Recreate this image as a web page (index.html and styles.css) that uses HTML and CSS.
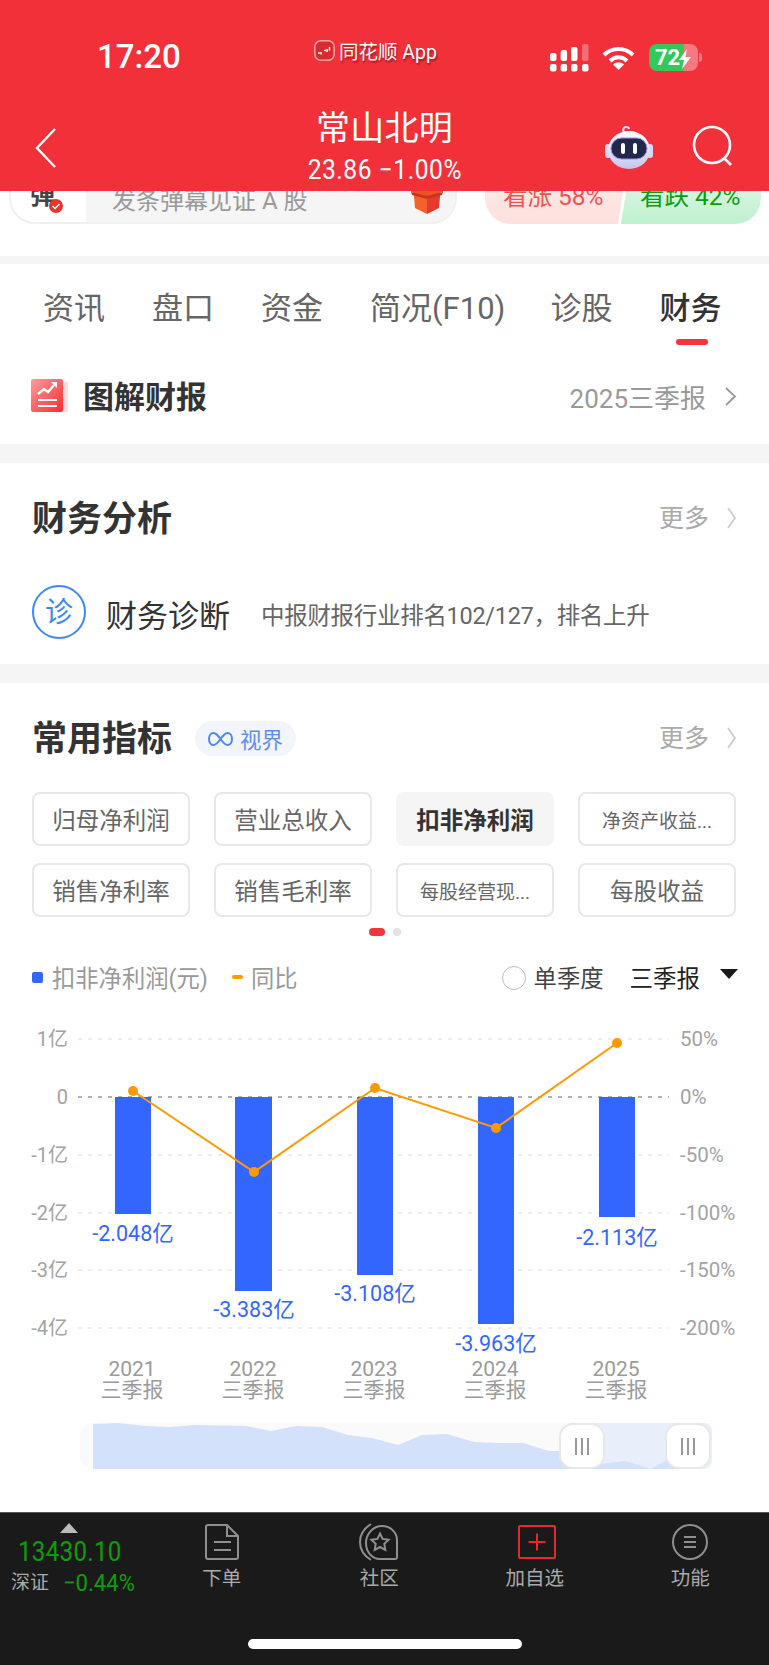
FILE: index.html
```html
<!DOCTYPE html>
<html lang="zh-CN">
<head>
  <meta charset="UTF-8">
  <title>常山北明 财务</title>
  <link rel="stylesheet" href="styles.css">
</head>
<body>
  <header class="top">
    <div class="status">
      <div class="clock">17:20</div>
      <div class="source">
        <svg class="source-logo" width="21" height="21" viewBox="0 0 21 21"><rect x="0.8" y="0.8" width="19.400" height="19.400" rx="6" fill="#d92a30" stroke="#f9a5a5" stroke-width="1.500"/><path d="M4 13h2M7 12v2.500M10 10.500h2M13 9v3M15.500 7v3.500" stroke="#fff" stroke-width="1.500"/></svg>
        <span>同花顺 App</span>
      </div>
      <div class="status-icons">
        <svg width="39" height="28" viewBox="0 0 39 28" fill="#fff">
          <rect x="0" y="9" width="6.500" height="8" rx="2"/><rect x="10.600" y="6" width="6.500" height="11" rx="2"/><rect x="21" y="3" width="6.500" height="14" rx="2"/><rect x="32" y="0" width="6.500" height="17" rx="2" opacity="0.3"/>
          <rect x="0" y="20" width="6.500" height="7.500" rx="2"/><rect x="10.600" y="20" width="6.500" height="7.500" rx="2"/><rect x="21" y="20" width="6.500" height="7.500" rx="2"/><rect x="32" y="20" width="6.500" height="7.500" rx="2"/>
        </svg>
        <svg width="33" height="24" viewBox="0 0 33 24" fill="none" stroke="#fff" stroke-width="4">
          <path d="M2 9C10 1 23 1 31 9"/><path d="M8 15c5-5 12-5 17 0"/><path d="M16.500 24l-5.500-5.500c3-2.600 8-2.600 11 0z" fill="#fff" stroke="none"/>
        </svg>
        <div class="battery">
          <div class="battery-body"><span class="battery-num">72</span>
            <svg class="bolt" width="12" height="20" viewBox="0 0 12 20"><path d="M8 0L0 11h5l-2 9 9-12H6.500z" fill="#fff"/></svg>
          </div>
          <i class="battery-tip"></i>
        </div>
      </div>
    </div>
    <div class="title-row">
      <svg class="back" width="24" height="42" viewBox="0 0 24 42" fill="none" stroke="#fff" stroke-width="2.400"><path d="M21 2L3 21l18 19"/></svg>
      <div class="title">
        <h1>常山北明</h1>
        <p>23.86 <span class="minus">−</span>1.00%</p>
      </div>
      <div class="title-icons">
        <svg width="48" height="44" viewBox="0 0 48 44">
          <defs>
            <linearGradient id="robotShell" x1="0" y1="0" x2="0" y2="1"><stop offset="0" stop-color="#fff"/><stop offset="1" stop-color="#c3c5f0"/></linearGradient>
          </defs>
          <path d="M20 8c-3-2-2-6 1-6 2 0 3 1 3 2" fill="none" stroke="#e8e8f8" stroke-width="2"/>
          <rect x="0" y="19" width="6" height="14" rx="3" fill="#d6d8f2"/><rect x="42" y="19" width="6" height="14" rx="3" fill="#d6d8f2"/>
          <ellipse cx="24" cy="25" rx="21" ry="19" fill="url(#robotShell)"/>
          <rect x="6" y="13" width="36" height="21" rx="10.500" fill="#20294a" stroke="#a78be8"/>
          <rect x="16" y="18" width="4" height="11" rx="2" fill="#fff"/><rect x="28" y="18" width="4" height="11" rx="2" fill="#fff"/>
        </svg>
        <svg width="42" height="42" viewBox="0 0 42 42" fill="none" stroke="#fff" stroke-width="2.600"><circle cx="20" cy="20" r="18"/><path d="M32 33l7 7"/></svg>
      </div>
    </div>
  </header>

  <div class="danmu">
    <div class="danmu-box">
      <div class="danmu-icon">
        <span>弹</span>
        <svg class="danmu-check" width="14" height="14" viewBox="0 0 14 14"><circle cx="7" cy="7" r="7" fill="#e8342e"/><path d="M3.500 7l2.500 2.500 4.500-4.500" fill="none" stroke="#fff" stroke-width="1.500"/></svg>
      </div>
      <div class="danmu-input">
        <span>发条弹幕见证 A 股</span>
        <svg class="gift" width="34" height="40" viewBox="0 0 34 40"><path d="M2 0h15v40L5 34z" fill="#f4622c"/><path d="M17 0h15l-3 34-12 6z" fill="#e63a30"/><path d="M0 0h34l-1 18-16 4-16-4z" fill="#ef5228"/><path d="M1 18l16 4 16-4-1 3-15 4-15-4z" fill="#c8341f"/></svg>
      </div>
    </div>
    <div class="vote">
      <div class="vote-up">看涨 58%</div>
      <div class="vote-down">看跌 42%</div>
    </div>
  </div>

  <div class="band band-thin"></div>

  <nav class="tabs">
    <span>资讯</span>
    <span>盘口</span>
    <span>资金</span>
    <span class="tab-long">简况(F10)</span>
    <span>诊股</span>
    <span class="tab-on">财务</span>
  </nav>

  <section class="report">
    <svg width="37" height="34" viewBox="0 0 37 34">
      <defs>
        <linearGradient id="reportFill" x1="0" y1="0" x2="1" y2="1"><stop offset="0" stop-color="#fb9c9c"/><stop offset="1" stop-color="#fe2b2e"/></linearGradient>
      </defs>
      <rect x="32" y="3" width="5" height="30" fill="#fcdcdc"/>
      <rect x="0" y="0" width="32" height="33" rx="2" fill="url(#reportFill)"/>
      <path d="M7 15l6-5 4 3 7-8" fill="none" stroke="#fff" stroke-width="2.400"/>
      <path d="M20 3h6v6z" fill="#fff"/>
      <path d="M7 21h19M7 27h19" stroke="#fff" stroke-width="2.200"/>
    </svg>
    <h3>图解财报</h3>
    <span class="report-date">2025三季报</span>
    <svg class="chevron" width="12" height="19" viewBox="0 0 12 19" fill="none" stroke="#999" stroke-width="1.800"><path d="M1 1l9 8.500-9 8.500"/></svg>
  </section>

  <div class="band"></div>

  <section class="analysis">
    <div class="head">
      <h2>财务分析</h2>
      <div class="more"><span>更多</span>
        <svg width="10" height="22" viewBox="0 0 10 22" fill="none" stroke="#ccc" stroke-width="1.800"><path d="M1 1l7 10-7 10"/></svg>
      </div>
    </div>
    <div class="diagnosis">
      <div class="diag-mark">诊</div>
      <div class="diag-name">财务诊断</div>
      <div class="diag-text">中报财报行业排名102/127，排名上升</div>
    </div>
  </section>

  <div class="band"></div>

  <section class="metrics">
    <div class="head head-metrics">
      <h2>常用指标</h2>
      <div class="scope">
        <svg width="25" height="14" viewBox="0 0 25 14" fill="none" stroke="#4f86f7" stroke-width="2"><path d="M12.500 7C9 2 7 1 5.500 1 3 1 1 3.500 1 7s2 6 4.500 6c1.500 0 3.500-1 7-6s5.500-6 7-6C22 1 24 3.500 24 7s-2 6-4.500 6c-1.500 0-3.500-1-7-6z"/></svg>
        <span>视界</span>
      </div>
      <div class="more"><span>更多</span>
        <svg width="10" height="22" viewBox="0 0 10 22" fill="none" stroke="#ccc" stroke-width="1.800"><path d="M1 1l7 10-7 10"/></svg>
      </div>
    </div>

    <div class="chips">
      <div class="chip">归母净利润</div>
      <div class="chip">营业总收入</div>
      <div class="chip chip-on">扣非净利润</div>
      <div class="chip chip-small">净资产收益...</div>
      <div class="chip">销售净利率</div>
      <div class="chip">销售毛利率</div>
      <div class="chip chip-small">每股经营现...</div>
      <div class="chip">每股收益</div>
    </div>

    <div class="pager"><i class="pager-on"></i><i></i></div>

    <div class="legend">
      <i class="key-bar"></i><span>扣非净利润(元)</span>
      <i class="key-line"></i><span>同比</span>
      <div class="legend-right">
        <i class="radio"></i><span class="dark">单季度</span>
        <span class="darker">三季报</span>
        <i class="caret"></i>
      </div>
    </div>

    <svg class="chart" width="769" height="400" viewBox="0 0 769 400">
      <g class="grid">
        <line x1="78" x2="669" y1="29" y2="29"/>
        <line x1="78" x2="669" y1="145" y2="145"/>
        <line x1="78" x2="669" y1="203" y2="203"/>
        <line x1="78" x2="669" y1="260" y2="260"/>
        <line x1="78" x2="669" y1="318" y2="318"/>
      </g>
      <line class="zero" x1="78" x2="669" y1="87" y2="87"/>

      <g class="axis axis-left">
        <text x="68" y="29">1亿</text>
        <text x="68" y="87">0</text>
        <text x="68" y="145">-1亿</text>
        <text x="68" y="203">-2亿</text>
        <text x="68" y="260">-3亿</text>
        <text x="68" y="318">-4亿</text>
      </g>
      <g class="axis axis-right">
        <text x="680" y="29">50%</text>
        <text x="680" y="87">0%</text>
        <text x="680" y="145">-50%</text>
        <text x="680" y="203">-100%</text>
        <text x="680" y="260">-150%</text>
        <text x="680" y="318">-200%</text>
      </g>

      <g class="bars">
        <rect x="115" y="87" width="36" height="117"/>
        <rect x="235" y="87" width="37" height="194"/>
        <rect x="357" y="87" width="36" height="178"/>
        <rect x="478" y="87" width="36" height="227"/>
        <rect x="599" y="87" width="36" height="120"/>
      </g>

      <polyline class="trend" points="133,81 254,162 375,78 496,118 617,33"/>
      <g class="dots">
        <circle cx="133" cy="81" r="5"/>
        <circle cx="254" cy="162" r="5"/>
        <circle cx="375" cy="78" r="5"/>
        <circle cx="496" cy="118" r="5"/>
        <circle cx="617" cy="33" r="5"/>
      </g>

      <g class="values">
        <text x="133" y="223">-2.048亿</text>
        <text x="254" y="299">-3.383亿</text>
        <text x="375" y="283">-3.108亿</text>
        <text x="496" y="333">-3.963亿</text>
        <text x="617" y="227">-2.113亿</text>
      </g>

      <g class="periods">
        <text x="132" y="359">2021</text><text x="132" y="380">三季报</text>
        <text x="253" y="359">2022</text><text x="253" y="380">三季报</text>
        <text x="374" y="359">2023</text><text x="374" y="380">三季报</text>
        <text x="495" y="359">2024</text><text x="495" y="380">三季报</text>
        <text x="616" y="359">2025</text><text x="616" y="380">三季报</text>
      </g>
    </svg>

    <div class="brush">
      <svg class="brush-area" width="632" height="46" viewBox="0 0 632 46">
        <rect class="brush-track" width="632" height="46" rx="14"/>
        <rect class="brush-range" x="503" width="129" height="46" rx="8"/>
        <path class="brush-fill" d="M13 1L38 0 65 3 90 4 114 2 166 3 191 8 216 3 242 4 268 12 292 15 318 22 342 12 367 11 394 19 419 20 443 20 469 28 494 28 520 41 545 38 571 46 595 32V46H13z"/>
      </svg>
      <div class="handle handle-left"><i></i><i></i><i></i></div>
      <div class="handle handle-right"><i></i><i></i><i></i></div>
    </div>
  </section>

  <footer class="bottom">
    <div class="index">
      <i class="index-arrow"></i>
      <div class="index-value">13430.10</div>
      <div class="index-line"><span>深证</span><b>−0.44%</b></div>
    </div>
    <div class="actions">
      <div class="action">
        <svg width="36" height="38" viewBox="0 0 36 38" fill="none" stroke="#8f8f8f" stroke-width="2"><path d="M4 2h19l11 11v21a2 2 0 0 1-2 2H4a2 2 0 0 1-2-2V4a2 2 0 0 1 2-2z"/><path d="M23 2v11h11M10 19h17M10 27h17"/></svg>
        <span>下单</span>
      </div>
      <div class="action action-community">
        <svg width="40" height="38" viewBox="0 0 40 38" fill="none" stroke="#8f8f8f" stroke-width="2"><path d="M12 37C4 32 1 25 1 19S4 6 12 1"/><path d="M23 3c9 0 15 7 15 14v17a2 2 0 0 1-2 2H21c-8 0-14-7-14-16S14 3 23 3z"/><path d="M21 10.500l2.600 5.400 6 .8-4.300 4.200 1 6L21 24l-5.300 2.900 1-6-4.300-4.200 6-.8z"/></svg>
        <span>社区</span>
      </div>
      <div class="action action-add">
        <svg width="38" height="34" viewBox="0 0 38 34" fill="none" stroke="#e8292b" stroke-width="2"><rect x="1" y="1" width="36" height="32" rx="1"/><path d="M19 8.500v17M10.500 17h17"/></svg>
        <span>加自选</span>
      </div>
      <div class="action">
        <svg width="36" height="36" viewBox="0 0 36 36" fill="none" stroke="#8f8f8f" stroke-width="2"><circle cx="18" cy="18" r="17"/><path d="M12 13h12M12 18h12M12 23h12"/></svg>
        <span>功能</span>
      </div>
    </div>
    <div class="home-bar"></div>
  </footer>
</body>
</html>
```

FILE: styles.css
```css
* {
  box-sizing: border-box;
}
body {
  margin: 0;
  width: 769px;
  height: 1665px;
  overflow: hidden;
  display: flex;
  flex-direction: column;
  background: #fff;
  font-family: Roboto, "Noto Sans CJK SC", sans-serif;
  color: #333;
}
h1, h2, h3, p {
  margin: 0;
  font-weight: normal;
}
i {
  display: block;
}

/* red header */
.top {
  height: 191px;
  flex: none;
  background: #f2303a;
  color: #fff;
  position: relative;
  z-index: 2;
}
.status {
  height: 100px;
  padding-top: 38px;
  display: grid;
  grid-template-columns: 1fr auto 1fr;
  align-items: start;
}
.clock {
  font-size: 33px;
  line-height: 38px;
  font-weight: 500;
  padding-left: 97px;
}
.source {
  display: flex;
  align-items: center;
  gap: 4px;
  height: 24px;
  margin-right: 18px;
  font-size: 19.500px;
  text-shadow: 1px 2px 2px rgba(90, 0, 0, .55);
}
.status-icons {
  display: flex;
  gap: 13px;
  align-items: flex-start;
  justify-content: flex-end;
  padding: 6px 67px 0 0;
}
.status-icons svg:nth-child(2) {
  margin-top: 2px;
}
.battery {
  display: flex;
  align-items: center;
  gap: 1px;
  margin-left: 1px;
}
.battery-body {
  width: 49px;
  height: 27px;
  border-radius: 8px;
  display: flex;
  align-items: center;
  padding-left: 6px;
  background: linear-gradient(to right, #34c759 0, #34c759 35px, rgba(255, 255, 255, .35) 35px);
}
.battery-num {
  font-size: 22px;
  font-weight: 700;
  line-height: 27px;
}
.bolt {
  margin-left: -1px;
}
.battery-tip {
  width: 3px;
  height: 9px;
  border-radius: 0 3px 3px 0;
  background: rgba(255, 255, 255, .4);
}
.title-row {
  height: 91px;
  display: grid;
  grid-template-columns: 1fr auto 1fr;
}
.back {
  margin: 27px 0 0 34px;
}
.title {
  text-align: center;
  margin-top: 4px;
}
.title h1 {
  font-size: 34px;
  line-height: 48px;
  letter-spacing: .3px;
}
.title p {
  font-size: 27px;
  line-height: 30px;
  margin-top: 3px;
  letter-spacing: .6px;
  transform: scaleX(.91);
}
.title-icons {
  display: flex;
  justify-content: flex-end;
  align-items: flex-start;
  gap: 39px;
  padding: 25px 35px 0 0;
}

/* barrage row, partly under the header */
.danmu {
  height: 65px;
  flex: none;
  overflow: hidden;
  display: flex;
  padding: 0 8px 0 9px;
  gap: 28px;
}
.danmu-box {
  width: 448px;
  height: 70px;
  margin-top: -37px;
  border: 2px solid #f0f0f0;
  border-radius: 26px;
  display: flex;
  overflow: hidden;
}
.danmu-icon {
  width: 75px;
  position: relative;
  padding: 25px 0 0 19px;
  font-size: 25px;
  font-weight: 700;
  line-height: 30px;
  color: #444;
}
.danmu-check {
  position: absolute;
  left: 38px;
  top: 43px;
}
.danmu-input {
  flex: 1;
  background: #f5f5f5;
  display: flex;
  align-items: center;
  justify-content: space-between;
  padding: 18px 11px 0 26px;
  font-size: 24px;
  color: #999;
}
.gift {
  margin-top: -8px;
}
.vote {
  display: flex;
  height: 70px;
  margin-top: -37px;
  font-size: 24.500px;
}
.vote div {
  height: 70px;
  padding-top: 26px;
  line-height: 34px;
}
.vote-up {
  width: 144px;
  padding-left: 18px;
  color: #f4524d;
  background: linear-gradient(to bottom, #ffeeec, #fde0dd);
  border-radius: 26px 0 0 26px;
  clip-path: polygon(0 0, 100% 0, calc(100% - 11px) 100%, 0 100%);
}
.vote-down {
  width: 140px;
  margin-left: -8px;
  padding-left: 19px;
  color: #0a9f0a;
  background: linear-gradient(to bottom, #effbf2, #bff0cf);
  border-radius: 0 26px 26px 0;
  clip-path: polygon(11px 0, 100% 0, 100% 100%, 0 100%);
}

.band {
  height: 19px;
  flex: none;
  background: #f5f5f5;
}
.band-thin {
  height: 8px;
}

/* tabs */
.tabs {
  height: 84px;
  flex: none;
  display: flex;
  gap: 47px;
  padding: 23px 0 0 43px;
  font-size: 31px;
  line-height: 44px;
  color: #666;
}
.tab-long {
  margin-right: -2px;
}
.tab-on {
  position: relative;
  color: #333;
  font-weight: 500;
}
.tab-on::after {
  content: "";
  position: absolute;
  left: 17px;
  top: 52px;
  width: 32px;
  height: 6px;
  border-radius: 3px;
  background: #f4333a;
}

.report {
  height: 96px;
  flex: none;
  display: flex;
  align-items: center;
  padding: 0 32px 0 31px;
}
.report h3 {
  font-size: 31px;
  font-weight: 700;
  margin: 0 0 4px 15px;
  flex: 1;
  color: #333;
}
.report-date {
  font-size: 26px;
  color: #999;
}
.chevron {
  margin-left: 19px;
}

/* section heads */
.head {
  height: 110px;
  display: flex;
  align-items: center;
  padding: 0 32px;
}
.head h2 {
  font-size: 35px;
  font-weight: 700;
  color: #333;
  margin-bottom: 5px;
}
.more {
  margin-left: auto;
  display: flex;
  align-items: center;
  gap: 18px;
  font-size: 25px;
  color: #aaa;
}
.more span {
  margin-bottom: 4px;
}

.analysis {
  height: 201px;
  flex: none;
}
.diagnosis {
  display: flex;
  align-items: center;
  padding: 12px 0 0 32px;
}
.diag-mark {
  width: 54px;
  height: 54px;
  border: 2px solid #3b88f5;
  border-radius: 50%;
  text-align: center;
  font-size: 28px;
  line-height: 52px;
  color: #3b88f5;
}
.diag-name {
  font-size: 31px;
  margin-left: 20px;
  padding-top: 3px;
}
.diag-text {
  font-size: 23.500px;
  letter-spacing: -.3px;
  color: #666;
  margin-left: 31px;
  padding-top: 4px;
}

/* common indicators */
.metrics {
  flex: 1;
}
.head-metrics {
  height: 109px;
}
.scope {
  width: 101px;
  height: 35px;
  margin: 2px 0 0 23px;
  border-radius: 18px;
  background: #f2f5f9;
  display: flex;
  align-items: center;
  gap: 7px;
  padding-left: 13px;
  font-size: 21.500px;
  color: #5b8ff3;
}
.chips {
  display: grid;
  grid-template-columns: repeat(4, 158px);
  grid-auto-rows: 54px;
  gap: 17px 24px;
  padding-left: 32px;
}
.chip {
  border: 2px solid #e8e8e8;
  border-radius: 8px;
  display: flex;
  align-items: center;
  justify-content: center;
  font-size: 23.500px;
  color: #666;
}
.chip-on {
  border-color: #f5f5f5;
  background: #f5f5f5;
  color: #333;
  font-weight: 700;
}
.chip-small {
  font-size: 19px;
}
.pager {
  display: flex;
  justify-content: center;
  gap: 8px;
  margin: 11px 0 0 1px;
  height: 8px;
}
.pager i {
  width: 8px;
  height: 8px;
  border-radius: 50%;
  background: #e2e2e2;
}
.pager .pager-on {
  width: 16px;
  border-radius: 4px;
  background: #f4333a;
}
.legend {
  height: 30px;
  margin-top: 26px;
  padding: 0 31px 0 32px;
  display: flex;
  align-items: center;
  font-size: 23.300px;
  color: #999;
}
.key-bar {
  width: 11px;
  height: 11px;
  border-radius: 2px;
  background: #3366ff;
  margin-right: 9px;
}
.key-line {
  width: 11px;
  height: 4px;
  border-radius: 2px;
  background: #ff9900;
  margin: 0 8px 0 24px;
}
.legend-right {
  margin-left: auto;
  display: flex;
  align-items: center;
}
.radio {
  width: 24px;
  height: 24px;
  border: 1.500px solid #bbb;
  border-radius: 50%;
  margin: 2px 8px 0 0;
}
.dark {
  color: #444;
}
.darker {
  color: #222;
  font-size: 23.500px;
  margin-left: 26px;
}
.caret {
  width: 0;
  height: 0;
  margin: -6px 0 0 20px;
  border-left: 9px solid transparent;
  border-right: 9px solid transparent;
  border-top: 10px solid #1a1a1a;
}

/* chart */
.chart {
  display: block;
  margin-top: 18px;
}
.chart text {
  dominant-baseline: central;
}
.grid line {
  stroke: #e8e8e8;
  stroke-width: 1.500;
  stroke-dasharray: 4 6;
}
.zero {
  stroke: #999;
  stroke-width: 1.500;
  stroke-dasharray: 4 6;
}
.axis {
  font-size: 20px;
  fill: #a3a3a3;
}
.axis-left {
  text-anchor: end;
}
.axis-right {
  font-size: 20.500px;
}
.bars {
  fill: #3366ff;
}
.trend {
  fill: none;
  stroke: #ff9900;
  stroke-width: 2;
}
.dots {
  fill: #ff9900;
}
.values {
  font-size: 21.500px;
  fill: #3366ff;
  text-anchor: middle;
}
.periods {
  font-size: 21px;
  fill: #9b9b9b;
  text-anchor: middle;
}

/* range slider */
.brush {
  position: relative;
  width: 632px;
  height: 46px;
  margin: 13px 0 0 80px;
}
.brush-area {
  display: block;
}
.brush-track {
  fill: #fafafa;
}
.brush-range {
  fill: #e8effb;
}
.brush-fill {
  fill: #d3e1fa;
}
.handle {
  position: absolute;
  top: 0;
  width: 46px;
  height: 46px;
  background: #fff;
  border: 2px solid #e8e8e8;
  border-radius: 14px;
  display: flex;
  align-items: center;
  justify-content: center;
  gap: 4px;
}
.handle i {
  width: 2px;
  height: 17px;
  background: #999;
}
.handle-left {
  left: 479px;
}
.handle-right {
  left: 585px;
}

/* bottom bar */
.bottom {
  height: 153px;
  flex: none;
  background: #1a1a1a;
  border-top: 1px solid #555;
  display: flex;
  position: relative;
  color: #aaa;
}
.index {
  width: 144px;
  flex: none;
  position: relative;
  padding-top: 24px;
}
.index-arrow {
  position: absolute;
  left: 60px;
  top: 10px;
  width: 0;
  height: 0;
  border-left: 9px solid transparent;
  border-right: 9px solid transparent;
  border-bottom: 10px solid #bbb;
}
.index-value {
  margin-left: 18px;
  font-size: 27px;
  line-height: 30px;
  color: #0a9f0a;
  letter-spacing: .4px;
  transform: scaleX(.89);
  transform-origin: left;
}
.index-line {
  display: flex;
  align-items: center;
  gap: 14px;
  padding-left: 11px;
  margin-top: 2px;
  font-size: 19px;
  line-height: 28px;
}
.index-line b {
  font-weight: normal;
  font-size: 24px;
  color: #0a9f0a;
  transform: scaleX(.92);
  transform-origin: left;
}
.actions {
  flex: 1;
  display: flex;
  padding-right: 1px;
}
.action {
  flex: 1;
  display: flex;
  flex-direction: column;
  align-items: center;
  padding-top: 10px;
  font-size: 19.500px;
}
.action svg {
  height: 38px;
}
.action span {
  margin-top: 4px;
  line-height: 28px;
}
.action-community {
  padding-left: 2px;
}
.action-add svg {
  margin-left: 4px;
}
.home-bar {
  position: absolute;
  left: 248px;
  top: 126px;
  width: 274px;
  height: 10px;
  border-radius: 5px;
  background: #fff;
}
```
